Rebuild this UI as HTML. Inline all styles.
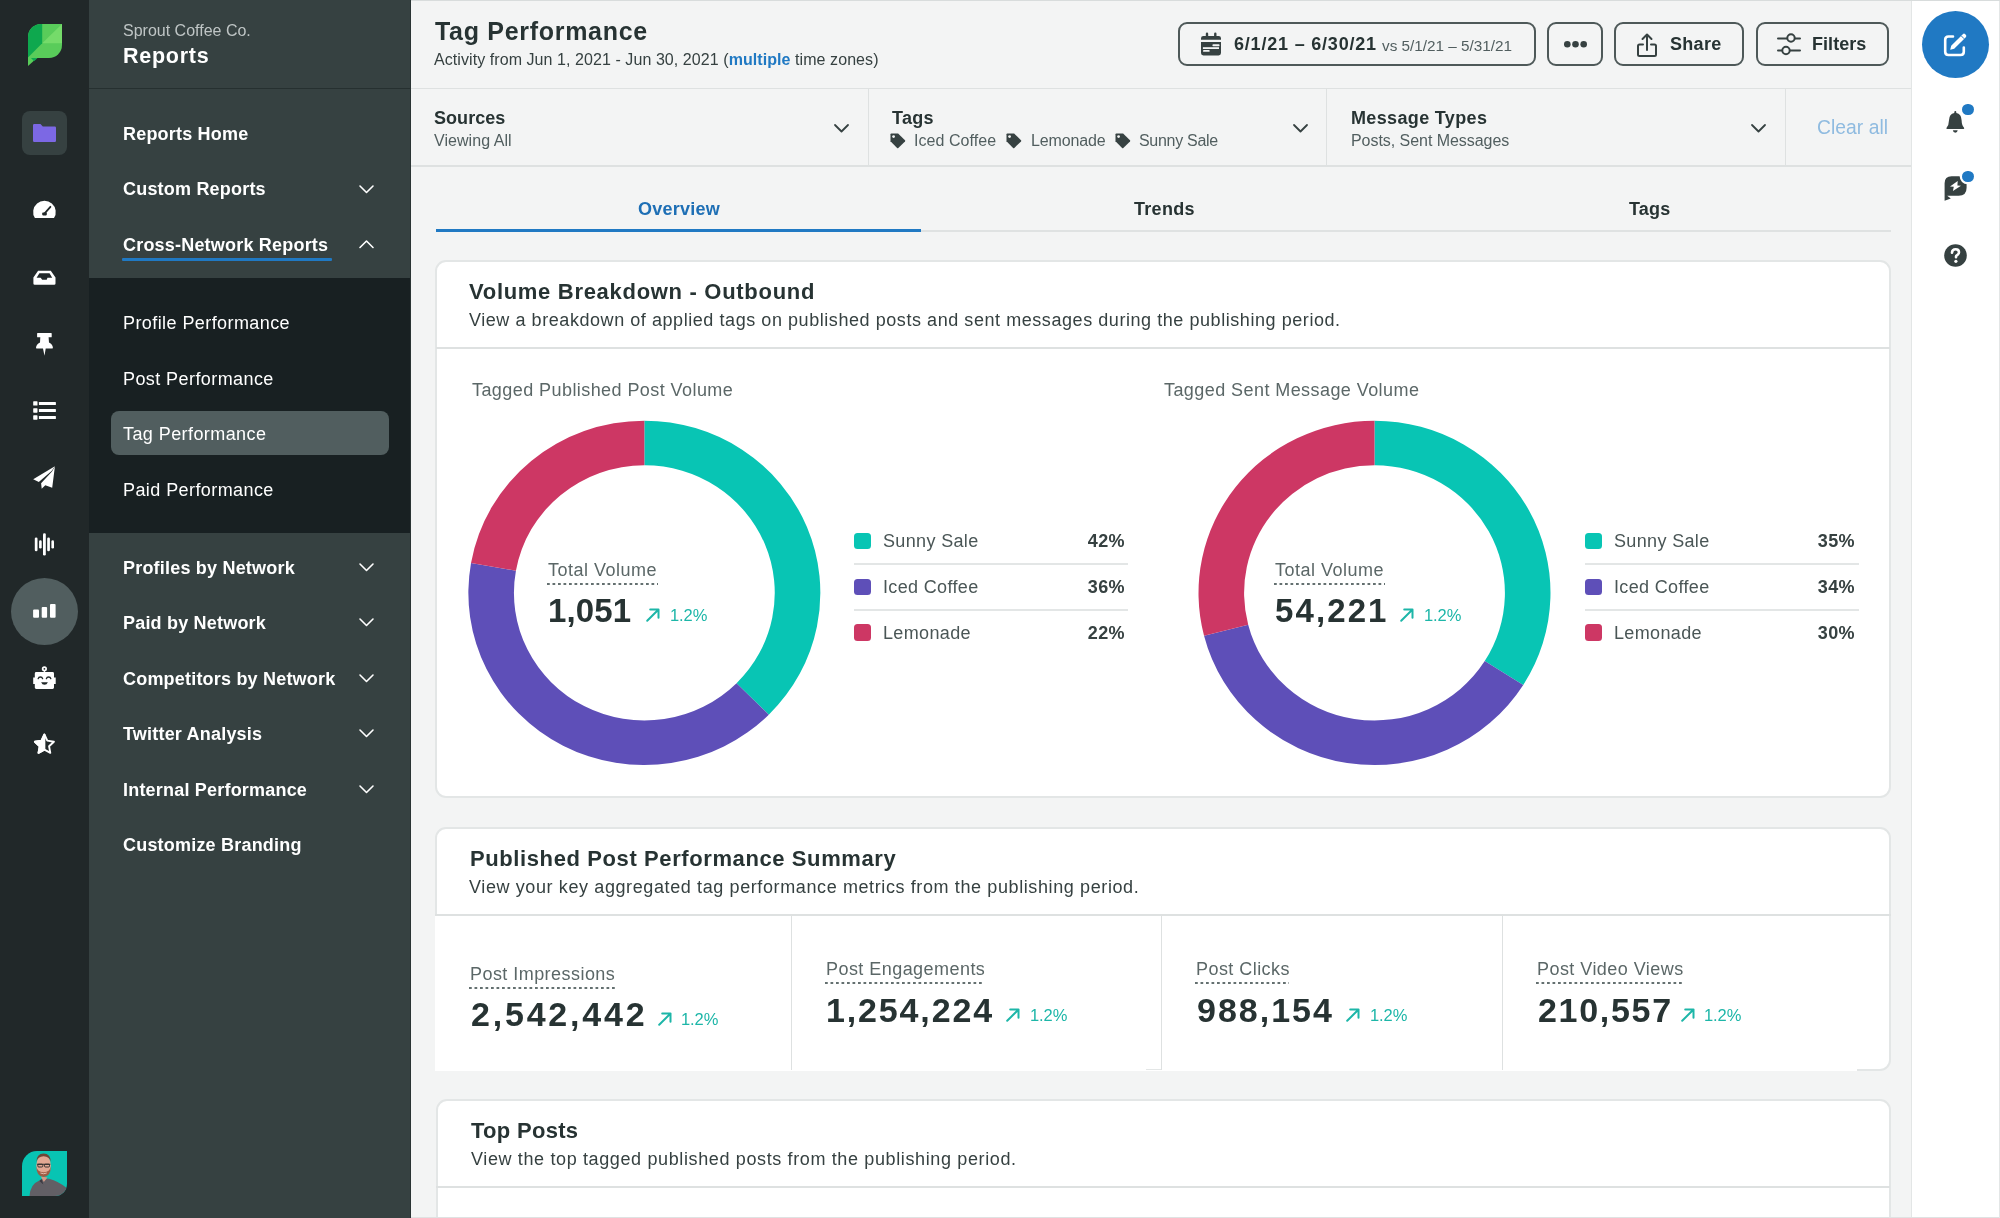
<!DOCTYPE html>
<html><head><meta charset="utf-8"><title>Tag Performance</title>
<style>
*{box-sizing:border-box;margin:0;padding:0}
html,body{width:2000px;height:1218px;overflow:hidden;background:#f3f4f4;font-family:"Liberation Sans",sans-serif}
.t{position:absolute;line-height:1;white-space:nowrap;will-change:transform}
.r{position:absolute}
svg{position:absolute;overflow:visible}
</style></head><body>
<div class="r" style="left:0px;top:0px;width:89px;height:1218px;background:#212829;"></div>
<svg style="left:28px;top:23.5px" width="34" height="42" viewBox="0 0 34 42">
<defs><clipPath id="leaf"><path d="M13 0H34V21A13 13 0 0 1 21 34H0V13A13 13 0 0 1 13 0Z"/></clipPath></defs>
<g clip-path="url(#leaf)">
<rect x="0" y="0" width="34" height="34" fill="#59cc5a"/>
<polygon points="0,0 14.2,0 14.2,19.3 0,33.5" fill="#0ea84e"/>
<polygon points="14.2,19.3 34,0 34,19.3" fill="#75db6a"/>
</g>
<polygon points="0,33.5 9.5,33.5 0,42" fill="#59cc5a"/>
<polygon points="3,34 9.5,34 6,37.2" fill="#0ea84e"/>
</svg>
<div class="r" style="left:22px;top:111px;width:45px;height:44px;background:#364141;border-radius:8px;"></div>
<svg style="left:33px;top:124px" width="23" height="18" viewBox="0 0 23 18">
<path d="M0 1.2Q0 0 1.2 0H7.5L9.8 2.6H21.8Q23 2.6 23 3.8V16.8Q23 18 21.8 18H1.2Q0 18 0 16.8Z" fill="#7c68e4"/>
</svg>
<svg style="left:24px;top:190px" width="40" height="40" viewBox="0 0 40 40">
<path d="M10.9 28.1A11.3 11.3 0 1 1 30 28.1Z" fill="#fff"/>
<path d="M20.2 23.8L26.4 16.8" stroke="#212829" stroke-width="1.8" stroke-linecap="round"/>
<rect x="18.2" y="22.6" width="4.6" height="2.8" rx="0.8" fill="#212829"/>
</svg>
<svg style="left:24px;top:258px" width="40" height="40" viewBox="0 0 40 40">
<path d="M14.1 12.8H26.8L31.5 19.4V25.5Q31.5 26.8 30.2 26.8H10.7Q9.4 26.8 9.4 25.5V19.4Z M15.4 15.3L12.6 19.7H16.7L18.2 21.8H22.7L23.5 19.7H28.2L25.5 15.3Z" fill="#fff" fill-rule="evenodd"/>
</svg>
<svg style="left:24px;top:325px" width="40" height="40" viewBox="0 0 40 40">
<path d="M13.6 8H27.2Q27.7 8 27.7 8.6V11.8Q27.7 12.3 27.2 12.3H24.6L25 17.6Q28.8 19.6 28.9 22.8Q28.9 23.5 28.3 23.5H21.7L20.5 30.7L19 23.5H12.6Q12 23.5 12 22.8Q12.2 19.6 16 17.6L16.3 12.3H13.6Q13.1 12.3 13.1 11.8V8.6Q13.1 8 13.6 8Z" fill="#fff"/>
</svg>
<svg style="left:24px;top:390px" width="40" height="40" viewBox="0 0 40 40" fill="#fff">
<rect x="9.2" y="11.2" width="4.3" height="4.4" rx="0.6"/><rect x="14.9" y="12" width="17" height="2.9" rx="0.5"/>
<rect x="9.2" y="18.2" width="4.3" height="4.5" rx="0.6"/><rect x="14.9" y="19" width="17" height="3" rx="0.5"/>
<rect x="9.2" y="25.3" width="4.3" height="4.4" rx="0.6"/><rect x="14.9" y="26" width="17" height="2.9" rx="0.5"/>
</svg>
<svg style="left:24px;top:457px" width="40" height="40" viewBox="0 0 40 40" fill="#fff">
<path d="M30.9 9.2L9.2 22.3L14.8 25L27.6 14.1Z"/>
<path d="M30.9 9.4L28.2 30.7L21.3 28.2L17.7 31.7L17.1 26.3L28 14.6Z"/>
</svg>
<svg style="left:24px;top:524px" width="40" height="40" viewBox="0 0 40 40" fill="#fff">
<rect x="10.8" y="13.5" width="2.7" height="13.8" rx="1.3"/>
<rect x="15.1" y="16.3" width="2.6" height="8.3" rx="1.3"/>
<rect x="19" y="9.2" width="2.8" height="22.3" rx="1.3"/>
<rect x="23.2" y="13.5" width="2.7" height="13.8" rx="1.3"/>
<rect x="27.4" y="16.3" width="2.6" height="8.3" rx="1.3"/>
</svg>
<div class="r" style="left:11px;top:578px;width:67px;height:67px;border-radius:50%;background:#515e5f"></div>
<svg style="left:0;top:0" width="89" height="700" viewBox="0 0 89 700" fill="#fff">
<rect x="33.1" y="609.6" width="5.9" height="8.2" rx="1"/>
<rect x="41.7" y="606.9" width="5.4" height="10.9" rx="1"/>
<rect x="50" y="604" width="5.6" height="13.8" rx="1"/>
</svg>
<svg style="left:24px;top:658px" width="40" height="40" viewBox="0 0 40 40">
<path d="M12.2 14H28.6Q30 14 30 15.4V19.4H31.7V25.9H30V29.6Q30 31 28.6 31H12.2Q10.8 31 10.8 29.6V25.9H9.2V19.4H10.8V15.4Q10.8 14 12.2 14Z" fill="#fff"/>
<circle cx="20.4" cy="10.8" r="2.6" fill="#fff"/><circle cx="20.4" cy="10.8" r="0.9" fill="#212829"/>
<rect x="19.9" y="12" width="1" height="2.5" fill="#fff"/>
<path d="M14.2 20.6A2.3 2.3 0 0 1 18.6 20.6M22.4 20.6A2.3 2.3 0 0 1 26.8 20.6" stroke="#212829" stroke-width="1.4" fill="none" stroke-linecap="round"/>
<path d="M17.1 24.2H23.9Q22.8 26.8 20.5 26.8Q18.2 26.8 17.1 24.2Z" fill="#212829"/>
</svg>
<svg style="left:24px;top:724px" width="40" height="40" viewBox="0 0 40 40">
<path d="M20.4 10.5L23.3 16.6L29.9 17.7L25.1 22.3L26.3 28.8L20.4 25.7L14.5 28.8L15.7 22.3L10.9 17.7L17.5 16.6Z" fill="none" stroke="#fff" stroke-width="1.9" stroke-linejoin="round"/>
<path d="M20.4 10.5V25.7L14.5 28.8L15.7 22.3L10.9 17.7L17.5 16.6Z" fill="#fff" stroke="#fff" stroke-width="1.9" stroke-linejoin="round"/>
</svg>
<svg style="left:22px;top:1151px" width="45" height="45" viewBox="0 0 45 45">
<defs><clipPath id="av"><path d="M15 0H45V33A12 12 0 0 1 33 45H0V15A15 15 0 0 1 15 0Z"/></clipPath></defs>
<g clip-path="url(#av)">
<rect width="45" height="45" fill="#08c4b3"/>
<path d="M7.5 45Q8.5 33 16.5 30L21 27.5L27 27.8Q37 30.5 46 38V45Z" fill="#625f65"/>
<path d="M18.8 25.5L21.8 31L25.5 26.5Z" fill="#d39a86"/>
<path d="M19.5 28L21.3 33.5L17.5 30Z" fill="#3a3840"/>
<ellipse cx="21.6" cy="14.6" rx="7.3" ry="10.6" fill="#e2a893"/>
<path d="M14.4 15.5Q14.4 25.5 21.6 26Q28.8 25.5 28.8 15.5Q27.5 21.5 21.6 21.2Q15.7 21.5 14.4 15.5Z" fill="#9c5d45"/>
<path d="M14.3 11Q14.5 2.4 21.6 2.4Q28.7 2.4 28.9 11Q27.5 5.5 21.6 5.3Q15.7 5.5 14.3 11Z" fill="#6e4636"/>
<path d="M15 13.2H28.3" stroke="#2b2b2b" stroke-width="1.1"/>
<rect x="15.8" y="13.2" width="5" height="2.8" rx="1" fill="none" stroke="#2b2b2b" stroke-width="0.9"/>
<rect x="22.5" y="13.2" width="5" height="2.8" rx="1" fill="none" stroke="#2b2b2b" stroke-width="0.9"/>
<path d="M18.5 22Q21.6 23.5 24.7 22" stroke="#ecc3b5" stroke-width="0.9" fill="none"/>
</g>
</svg>
<div class="r" style="left:89px;top:0px;width:322px;height:1218px;background:#364141;"></div>
<div class="r" style="left:410px;top:0px;width:1px;height:1218px;background:#2a3434;"></div>
<div class="r" style="left:89px;top:88px;width:321px;height:1px;background:#263030;"></div>
<div class="t " style="left:122.50px;top:22.76px;font-size:16px;color:#bfc5c5;font-weight:400;letter-spacing:0px;">Sprout Coffee Co.</div>
<div class="t " style="left:123.00px;top:45.60px;font-size:21.5px;color:#ffffff;font-weight:700;letter-spacing:0.75px;">Reports</div>
<div class="t " style="left:122.50px;top:124.86px;font-size:18px;color:#ffffff;font-weight:700;letter-spacing:0.2px;">Reports Home</div>
<div class="t " style="left:122.50px;top:180.46px;font-size:18px;color:#ffffff;font-weight:700;letter-spacing:0.2px;">Custom Reports</div>
<div class="t " style="left:122.50px;top:236.16px;font-size:18px;color:#ffffff;font-weight:700;letter-spacing:0.2px;">Cross-Network Reports</div>
<div class="r" style="left:122px;top:258px;width:210px;height:3px;background:#2079c3;border-radius:1px;"></div>
<svg style="left:359px;top:184.8px" width="15" height="9" viewBox="0 0 15 9"><path d="M1 1L7.5 7.5L14 1" stroke="#fff" stroke-width="1.6" fill="none" stroke-linecap="round" stroke-linejoin="round"/></svg>
<svg style="left:359px;top:239.5px" width="15" height="9" viewBox="0 0 15 9"><path d="M1 7.5L7.5 1L14 7.5" stroke="#fff" stroke-width="1.6" fill="none" stroke-linecap="round" stroke-linejoin="round"/></svg>
<div class="r" style="left:89px;top:278px;width:321px;height:255px;background:#182022;"></div>
<div class="r" style="left:111px;top:411px;width:278px;height:44px;background:#515e5f;border-radius:8px;"></div>
<div class="t " style="left:122.50px;top:314.16px;font-size:18px;color:#ffffff;font-weight:400;letter-spacing:0.42px;">Profile Performance</div>
<div class="t " style="left:122.50px;top:369.76px;font-size:18px;color:#ffffff;font-weight:400;letter-spacing:0.42px;">Post Performance</div>
<div class="t " style="left:122.50px;top:425.26px;font-size:18px;color:#ffffff;font-weight:400;letter-spacing:0.42px;">Tag Performance</div>
<div class="t " style="left:122.50px;top:480.76px;font-size:18px;color:#ffffff;font-weight:400;letter-spacing:0.42px;">Paid Performance</div>
<div class="t " style="left:122.50px;top:558.76px;font-size:18px;color:#ffffff;font-weight:700;letter-spacing:0.2px;">Profiles by Network</div>
<svg style="left:359px;top:563.0px" width="15" height="9" viewBox="0 0 15 9"><path d="M1 1L7.5 7.5L14 1" stroke="#fff" stroke-width="1.6" fill="none" stroke-linecap="round" stroke-linejoin="round"/></svg>
<div class="t " style="left:122.50px;top:614.24px;font-size:18px;color:#ffffff;font-weight:700;letter-spacing:0.2px;">Paid by Network</div>
<svg style="left:359px;top:618.48px" width="15" height="9" viewBox="0 0 15 9"><path d="M1 1L7.5 7.5L14 1" stroke="#fff" stroke-width="1.6" fill="none" stroke-linecap="round" stroke-linejoin="round"/></svg>
<div class="t " style="left:122.50px;top:669.72px;font-size:18px;color:#ffffff;font-weight:700;letter-spacing:0.2px;">Competitors by Network</div>
<svg style="left:359px;top:673.96px" width="15" height="9" viewBox="0 0 15 9"><path d="M1 1L7.5 7.5L14 1" stroke="#fff" stroke-width="1.6" fill="none" stroke-linecap="round" stroke-linejoin="round"/></svg>
<div class="t " style="left:122.50px;top:725.20px;font-size:18px;color:#ffffff;font-weight:700;letter-spacing:0.2px;">Twitter Analysis</div>
<svg style="left:359px;top:729.44px" width="15" height="9" viewBox="0 0 15 9"><path d="M1 1L7.5 7.5L14 1" stroke="#fff" stroke-width="1.6" fill="none" stroke-linecap="round" stroke-linejoin="round"/></svg>
<div class="t " style="left:122.50px;top:780.68px;font-size:18px;color:#ffffff;font-weight:700;letter-spacing:0.2px;">Internal Performance</div>
<svg style="left:359px;top:784.92px" width="15" height="9" viewBox="0 0 15 9"><path d="M1 1L7.5 7.5L14 1" stroke="#fff" stroke-width="1.6" fill="none" stroke-linecap="round" stroke-linejoin="round"/></svg>
<div class="t " style="left:122.50px;top:836.16px;font-size:18px;color:#ffffff;font-weight:700;letter-spacing:0.2px;">Customize Branding</div>
<div class="r" style="left:411px;top:0px;width:1501px;height:1px;background:#d8dcdc;"></div>
<div class="t " style="left:434.50px;top:19.04px;font-size:25px;color:#273333;font-weight:700;letter-spacing:0.7px;">Tag Performance</div>
<div class="t " style="left:434.00px;top:51.66px;font-size:16px;color:#364141;font-weight:400;letter-spacing:0.07px;">Activity from Jun 1, 2021 - Jun 30, 2021 (<b style="color:#2079c3">multiple</b> time zones)</div>
<div class="r" style="left:411px;top:88px;width:1501px;height:1px;background:#dee1e1;"></div>
<div class="r" style="left:1178px;top:22px;width:358px;height:44px;border:2px solid #4e5959;border-radius:9px"></div>
<svg style="left:1201px;top:33px" width="20" height="23" viewBox="0 0 20 23">
<path d="M6 0.8V3.2M14.3 0.8V3.2" stroke="#364141" stroke-width="2.4" stroke-linecap="round"/>
<path d="M2.4 2.9H17.6Q20 2.9 20 5.3V6.8H0V5.3Q0 2.9 2.4 2.9Z" fill="#364141"/>
<path d="M0 8.9H20V20Q20 22.4 17.6 22.4H2.4Q0 22.4 0 20Z" fill="#364141"/>
<rect x="11.4" y="11.3" width="7.2" height="1.9" rx="0.9" fill="#f3f4f4"/>
<rect x="1.9" y="14.2" width="16.1" height="1.8" fill="#f3f4f4"/>
<rect x="2" y="17" width="6.7" height="1.8" rx="0.9" fill="#f3f4f4"/>
</svg>
<div class="t " style="left:1233.80px;top:35.36px;font-size:18px;color:#273333;font-weight:700;letter-spacing:0.8px;">6/1/21 – 6/30/21</div>
<div class="t " style="left:1382.00px;top:37.65px;font-size:15.3px;color:#515e5f;font-weight:400;letter-spacing:0px;">vs 5/1/21 – 5/31/21</div>
<div class="r" style="left:1547px;top:22px;width:56px;height:44px;border:2px solid #4e5959;border-radius:9px"></div>
<svg style="left:1564px;top:41px" width="23" height="7" viewBox="0 0 23 7" fill="#364141"><circle cx="3.3" cy="3.3" r="3.3"/><circle cx="11.5" cy="3.3" r="3.3"/><circle cx="19.7" cy="3.3" r="3.3"/></svg>
<div class="r" style="left:1614px;top:22px;width:130px;height:44px;border:2px solid #4e5959;border-radius:9px"></div>
<svg style="left:1637px;top:33px" width="21" height="24" viewBox="0 0 21 24">
<path d="M6 11.5H2.5Q1 11.5 1 13V21.5Q1 23 2.5 23H17.5Q19 23 19 21.5V13Q19 11.5 17.5 11.5H14M10 17V1.5M5.5 6L10 1.5L14.5 6" stroke="#364141" stroke-width="2" fill="none" stroke-linecap="round" stroke-linejoin="round"/>
</svg>
<div class="t " style="left:1670.00px;top:35.36px;font-size:18px;color:#273333;font-weight:700;letter-spacing:0.3px;">Share</div>
<div class="r" style="left:1756px;top:22px;width:133px;height:44px;border:2px solid #4e5959;border-radius:9px"></div>
<svg style="left:1777px;top:33px" width="24" height="23" viewBox="0 0 24 23">
<path d="M1 5.5H10M18 5.5H23M1 17.5H5M13 17.5H23" stroke="#364141" stroke-width="2" stroke-linecap="round"/>
<circle cx="14" cy="5" r="3.7" stroke="#364141" stroke-width="2" fill="none"/>
<circle cx="9" cy="17.5" r="3.7" stroke="#364141" stroke-width="2" fill="none"/>
</svg>
<div class="t " style="left:1811.80px;top:35.36px;font-size:18px;color:#273333;font-weight:700;letter-spacing:0.05px;">Filters</div>
<div class="r" style="left:411px;top:165px;width:1501px;height:1.5px;background:#dee1e1;"></div>
<div class="r" style="left:868px;top:88px;width:1px;height:78px;background:#dee1e1;"></div>
<div class="r" style="left:1326px;top:88px;width:1px;height:78px;background:#dee1e1;"></div>
<div class="r" style="left:1785px;top:88px;width:1px;height:78px;background:#dee1e1;"></div>
<div class="t " style="left:434.00px;top:108.86px;font-size:18px;color:#273333;font-weight:700;letter-spacing:0.05px;">Sources</div>
<div class="t " style="left:434.00px;top:132.66px;font-size:16px;color:#515e5f;font-weight:400;letter-spacing:0.05px;">Viewing All</div>
<svg style="left:834px;top:124px" width="15" height="9" viewBox="0 0 15 9"><path d="M1 1L7.5 7.5L14 1" stroke="#364141" stroke-width="1.8" fill="none" stroke-linecap="round" stroke-linejoin="round"/></svg>
<div class="t " style="left:892.30px;top:108.86px;font-size:18px;color:#273333;font-weight:700;letter-spacing:0.3px;">Tags</div>
<svg style="left:889.5px;top:132.5px" width="16" height="16" viewBox="0 0 16 16"><path d="M0.5 1.3Q0.5 0.5 1.3 0.5H8.1L15 7.3Q15.5 7.9 15 8.5L8.3 14.9Q7.7 15.4 7.1 14.9L0.5 8.3Z" fill="#364141"/><circle cx="3.6" cy="3.6" r="1.4" fill="#f3f4f4"/></svg>
<div class="t " style="left:914.20px;top:132.66px;font-size:16px;color:#515e5f;font-weight:400;letter-spacing:0.05px;">Iced Coffee</div>
<svg style="left:1006px;top:132.5px" width="16" height="16" viewBox="0 0 16 16"><path d="M0.5 1.3Q0.5 0.5 1.3 0.5H8.1L15 7.3Q15.5 7.9 15 8.5L8.3 14.9Q7.7 15.4 7.1 14.9L0.5 8.3Z" fill="#364141"/><circle cx="3.6" cy="3.6" r="1.4" fill="#f3f4f4"/></svg>
<div class="t " style="left:1031.00px;top:132.66px;font-size:16px;color:#515e5f;font-weight:400;letter-spacing:-0.15px;">Lemonade</div>
<svg style="left:1115px;top:132.5px" width="16" height="16" viewBox="0 0 16 16"><path d="M0.5 1.3Q0.5 0.5 1.3 0.5H8.1L15 7.3Q15.5 7.9 15 8.5L8.3 14.9Q7.7 15.4 7.1 14.9L0.5 8.3Z" fill="#364141"/><circle cx="3.6" cy="3.6" r="1.4" fill="#f3f4f4"/></svg>
<div class="t " style="left:1139.00px;top:132.66px;font-size:16px;color:#515e5f;font-weight:400;letter-spacing:-0.3px;">Sunny Sale</div>
<svg style="left:1292.5px;top:123.5px" width="15" height="9" viewBox="0 0 15 9"><path d="M1 1L7.5 7.5L14 1" stroke="#364141" stroke-width="1.8" fill="none" stroke-linecap="round" stroke-linejoin="round"/></svg>
<div class="t " style="left:1350.60px;top:108.86px;font-size:18px;color:#273333;font-weight:700;letter-spacing:0.35px;">Message Types</div>
<div class="t " style="left:1350.60px;top:132.66px;font-size:16px;color:#515e5f;font-weight:400;letter-spacing:-0.05px;">Posts, Sent Messages</div>
<svg style="left:1750.5px;top:123.5px" width="15" height="9" viewBox="0 0 15 9"><path d="M1 1L7.5 7.5L14 1" stroke="#364141" stroke-width="1.8" fill="none" stroke-linecap="round" stroke-linejoin="round"/></svg>
<div class="t " style="left:1816.70px;top:117.86px;font-size:19.3px;color:#8fbbe0;font-weight:400;letter-spacing:0.05px;">Clear all</div>
<div class="r" style="left:921px;top:230px;width:970px;height:2px;background:#dfe2e2;"></div>
<div class="r" style="left:436px;top:229px;width:485px;height:3px;background:#2079c3;"></div>
<div class="t " style="left:637.60px;top:200.16px;font-size:18px;color:#1e6fb5;font-weight:700;letter-spacing:0.25px;">Overview</div>
<div class="t " style="left:1133.90px;top:200.16px;font-size:18px;color:#273333;font-weight:700;letter-spacing:0.3px;">Trends</div>
<div class="t " style="left:1628.60px;top:200.16px;font-size:18px;color:#273333;font-weight:700;letter-spacing:0.2px;">Tags</div>
<div class="r" style="left:1911px;top:0px;width:89px;height:1218px;background:#ffffff;"></div>
<div class="r" style="left:1911px;top:0px;width:1px;height:1218px;background:#e3e6e6;"></div>
<div class="r" style="left:1922px;top:11px;width:67px;height:67px;border-radius:50%;background:#2079c3"></div>
<svg style="left:1943px;top:32px" width="26" height="26" viewBox="0 0 26 26">
<path d="M10 4.5H5.5Q2.2 4.5 2.2 7.8V19.8Q2.2 23 5.5 23H17.5Q20.8 23 20.8 19.8V15.5" stroke="#fff" stroke-width="2.6" fill="none" stroke-linecap="round"/>
<path d="M7.2 17.8L8.2 13.8L19.8 2.2Q21 1 22.2 2.2L22.8 2.8Q24 4 22.8 5.2L11.2 16.8Z" fill="#fff"/>
<path d="M18.2 3.8L21.2 6.8" stroke="#2079c3" stroke-width="1"/>
</svg>
<svg style="left:1945px;top:110px" width="22" height="24" viewBox="0 0 22 24">
<path d="M10.3 1.1Q11.3 1.1 11.3 2.2V3.1Q16.4 4.2 16.6 10.2Q16.8 15.3 18.9 17.6Q19.8 18.8 18.6 19.1H2Q0.8 18.8 1.7 17.6Q3.8 15.3 4 10.2Q4.2 4.2 9.3 3.1V2.2Q9.3 1.1 10.3 1.1Z" fill="#364141"/>
<path d="M7.9 20.3H12.7Q12.5 22.7 10.3 22.7Q8.1 22.7 7.9 20.3Z" fill="#364141"/>
</svg>
<div class="r" style="left:1962.3px;top:104px;width:11.4px;height:11.4px;border-radius:50%;background:#2079c3;box-shadow:0 0 0 2px #fff"></div>
<svg style="left:1944px;top:176px" width="24" height="26" viewBox="0 0 24 26">
<path d="M0.6 7.3Q0.6 0.3 7.6 0.3H22.6V11.7Q22.6 19.7 14.6 19.7H3.2L6.8 22.5L0.6 24.8Z" fill="#364141"/>
<path d="M13.7 5.1L6 10.5L9.8 10.7L8.9 14.9L17 9.7L13.4 9.4Z" fill="#fff"/>
</svg>
<div class="r" style="left:1962.1px;top:170.5px;width:11.5px;height:11.5px;border-radius:50%;background:#2079c3;box-shadow:0 0 0 2.3px #fff"></div>
<svg style="left:1944px;top:244px" width="23" height="23" viewBox="0 0 23 23">
<circle cx="11.5" cy="11.5" r="11.3" fill="#364141"/>
<path d="M8 8.6Q8.2 5.2 11.6 5.2Q15 5.2 15 8.3Q15 10.2 12.8 11.3Q12 11.8 12 12.8V13.3" stroke="#fff" stroke-width="2.6" fill="none" stroke-linecap="round"/>
<circle cx="11.9" cy="17.3" r="1.6" fill="#fff"/>
</svg>
<div class="r" style="left:435px;top:260px;width:1456px;height:538px;background:#fff;border:2px solid #e3e6e6;border-radius:11px"></div>
<div class="r" style="left:436px;top:347px;width:1454px;height:1.5px;background:#dee1e1;"></div>
<div class="t " style="left:469.10px;top:281.18px;font-size:22px;color:#273333;font-weight:700;letter-spacing:0.7px;">Volume Breakdown - Outbound</div>
<div class="t " style="left:469.00px;top:311.06px;font-size:18px;color:#364141;font-weight:400;letter-spacing:0.56px;">View a breakdown of applied tags on published posts and sent messages during the publishing period.</div>
<div class="t " style="left:471.70px;top:380.56px;font-size:18px;color:#5b6767;font-weight:400;letter-spacing:0.43px;">Tagged Published Post Volume</div>
<div class="t " style="left:1164.00px;top:380.56px;font-size:18px;color:#5b6767;font-weight:400;letter-spacing:0.43px;">Tagged Sent Message Volume</div>
<svg style="left:0;top:0" width="2000" height="1218" viewBox="0 0 2000 1218"><g transform="translate(644.35 592.9) scale(1.022 1)"><path d="M0.000 -172.200A172.2 172.2 0 0 1 121.764 121.764L90.227 90.227A127.6 127.6 0 0 0 0.000 -127.600Z" fill="#08c5b4"/><path d="M121.764 121.764A172.2 172.2 0 0 1 -169.584 -29.902L-125.661 -22.158A127.6 127.6 0 0 0 90.227 90.227Z" fill="#5e4fb8"/><path d="M-169.584 -29.902A172.2 172.2 0 0 1 -0.000 -172.200L-0.000 -127.600A127.6 127.6 0 0 0 -125.661 -22.158Z" fill="#cd3764"/></g></svg>
<svg style="left:0;top:0" width="2000" height="1218" viewBox="0 0 2000 1218"><g transform="translate(1374.5 592.9) scale(1.022 1)"><path d="M0.000 -172.200A172.2 172.2 0 0 1 145.554 92.015L107.855 68.183A127.6 127.6 0 0 0 0.000 -127.600Z" fill="#08c5b4"/><path d="M145.554 92.015A172.2 172.2 0 0 1 -166.790 42.824L-123.591 31.733A127.6 127.6 0 0 0 107.855 68.183Z" fill="#5e4fb8"/><path d="M-166.790 42.824A172.2 172.2 0 0 1 -0.000 -172.200L-0.000 -127.600A127.6 127.6 0 0 0 -123.591 31.733Z" fill="#cd3764"/></g></svg>
<div class="t " style="left:547.80px;top:560.56px;font-size:18px;color:#5b6767;font-weight:400;letter-spacing:0.5px;">Total Volume</div>
<div class="r" style="left:546.5px;top:582.5px;width:111px;height:2px;background-image:linear-gradient(90deg,#647070 55%,transparent 55%);background-size:5.5px 1.6px"></div>
<div class="t " style="left:547.80px;top:593.57px;font-size:33px;color:#273333;font-weight:700;letter-spacing:0.1px;">1,051</div>
<svg style="left:646px;top:607.5px" width="14" height="14" viewBox="0 0 14 14"><path d="M1.2 12.8L12.5 1.5M4.2 1.5H12.5V9.8" stroke="#1db6a8" stroke-width="2" fill="none" stroke-linecap="round" stroke-linejoin="round"/></svg>
<div class="t " style="left:669.80px;top:606.83px;font-size:16.5px;color:#1db6a8;font-weight:400;letter-spacing:-0.1px;">1.2%</div>
<div class="t " style="left:1275.00px;top:560.56px;font-size:18px;color:#5b6767;font-weight:400;letter-spacing:0.5px;">Total Volume</div>
<div class="r" style="left:1273.7px;top:582.5px;width:111px;height:2px;background-image:linear-gradient(90deg,#647070 55%,transparent 55%);background-size:5.5px 1.6px"></div>
<div class="t " style="left:1275.00px;top:593.57px;font-size:33px;color:#273333;font-weight:700;letter-spacing:2.1px;">54,221</div>
<svg style="left:1400px;top:607.5px" width="14" height="14" viewBox="0 0 14 14"><path d="M1.2 12.8L12.5 1.5M4.2 1.5H12.5V9.8" stroke="#1db6a8" stroke-width="2" fill="none" stroke-linecap="round" stroke-linejoin="round"/></svg>
<div class="t " style="left:1424.00px;top:606.83px;font-size:16.5px;color:#1db6a8;font-weight:400;letter-spacing:-0.1px;">1.2%</div>
<div class="r" style="left:854.25px;top:532.75px;width:16.5px;height:16.5px;border-radius:3.5px;background:#08c5b4"></div>
<div class="t " style="left:882.75px;top:532.06px;font-size:18px;color:#4a5656;font-weight:400;letter-spacing:0.35px;">Sunny Sale</div>
<div class="t" style="left:1044.5px;width:80px;text-align:right;top:532.06px;font-size:18px;font-weight:700;color:#364141;letter-spacing:0.4px">42%</div>
<div class="r" style="left:854.25px;top:563.0px;width:273.75px;height:2px;background:#e3e6e6;"></div>
<div class="r" style="left:854.25px;top:578.50px;width:16.5px;height:16.5px;border-radius:3.5px;background:#5e4fb8"></div>
<div class="t " style="left:882.75px;top:577.81px;font-size:18px;color:#4a5656;font-weight:400;letter-spacing:0.35px;">Iced Coffee</div>
<div class="t" style="left:1044.5px;width:80px;text-align:right;top:577.81px;font-size:18px;font-weight:700;color:#364141;letter-spacing:0.4px">36%</div>
<div class="r" style="left:854.25px;top:608.7px;width:273.75px;height:2px;background:#e3e6e6;"></div>
<div class="r" style="left:854.25px;top:624.25px;width:16.5px;height:16.5px;border-radius:3.5px;background:#cd3764"></div>
<div class="t " style="left:882.75px;top:623.56px;font-size:18px;color:#4a5656;font-weight:400;letter-spacing:0.35px;">Lemonade</div>
<div class="t" style="left:1044.5px;width:80px;text-align:right;top:623.56px;font-size:18px;font-weight:700;color:#364141;letter-spacing:0.4px">22%</div>
<div class="r" style="left:1585px;top:532.75px;width:16.5px;height:16.5px;border-radius:3.5px;background:#08c5b4"></div>
<div class="t " style="left:1613.50px;top:532.06px;font-size:18px;color:#4a5656;font-weight:400;letter-spacing:0.35px;">Sunny Sale</div>
<div class="t" style="left:1775px;width:80px;text-align:right;top:532.06px;font-size:18px;font-weight:700;color:#364141;letter-spacing:0.4px">35%</div>
<div class="r" style="left:1585px;top:563.0px;width:273.5px;height:2px;background:#e3e6e6;"></div>
<div class="r" style="left:1585px;top:578.50px;width:16.5px;height:16.5px;border-radius:3.5px;background:#5e4fb8"></div>
<div class="t " style="left:1613.50px;top:577.81px;font-size:18px;color:#4a5656;font-weight:400;letter-spacing:0.35px;">Iced Coffee</div>
<div class="t" style="left:1775px;width:80px;text-align:right;top:577.81px;font-size:18px;font-weight:700;color:#364141;letter-spacing:0.4px">34%</div>
<div class="r" style="left:1585px;top:608.7px;width:273.5px;height:2px;background:#e3e6e6;"></div>
<div class="r" style="left:1585px;top:624.25px;width:16.5px;height:16.5px;border-radius:3.5px;background:#cd3764"></div>
<div class="t " style="left:1613.50px;top:623.56px;font-size:18px;color:#4a5656;font-weight:400;letter-spacing:0.35px;">Lemonade</div>
<div class="t" style="left:1775px;width:80px;text-align:right;top:623.56px;font-size:18px;font-weight:700;color:#364141;letter-spacing:0.4px">30%</div>
<div class="r" style="left:435px;top:826.5px;width:1456px;height:244px;background:#fff;border:2px solid #e3e6e6;border-radius:11px"></div>
<div class="r" style="left:435px;top:914px;width:1456px;height:1.5px;background:#dee1e1;"></div>
<div class="r" style="left:435px;top:915.5px;width:1422px;height:155px;background:#fff;"></div>
<div class="r" style="left:791px;top:915px;width:1px;height:155px;background:#dee1e1;"></div>
<div class="r" style="left:1161px;top:915px;width:1px;height:155px;background:#dee1e1;"></div>
<div class="r" style="left:1502px;top:915px;width:1px;height:155px;background:#dee1e1;"></div>
<div class="r" style="left:1146px;top:1069px;width:15px;height:1px;background:#e3e6e6;"></div>
<div class="t " style="left:469.50px;top:848.38px;font-size:22px;color:#273333;font-weight:700;letter-spacing:0.6px;">Published Post Performance Summary</div>
<div class="t " style="left:469.00px;top:877.76px;font-size:18px;color:#364141;font-weight:400;letter-spacing:0.61px;">View your key aggregated tag performance metrics from the publishing period.</div>
<div class="t " style="left:470.00px;top:964.76px;font-size:18px;color:#5b6767;font-weight:400;letter-spacing:0.45px;">Post Impressions</div>
<div class="r" style="left:469px;top:986.5px;width:146px;height:2px;background-image:linear-gradient(90deg,#647070 55%,transparent 55%);background-size:5.5px 1.6px"></div>
<div class="t " style="left:470.50px;top:997.22px;font-size:34px;color:#273333;font-weight:700;letter-spacing:2.8px;">2,542,442</div>
<svg style="left:657.6px;top:1012px" width="14" height="14" viewBox="0 0 14 14"><path d="M1.2 12.8L12.5 1.5M4.2 1.5H12.5V9.8" stroke="#1db6a8" stroke-width="2" fill="none" stroke-linecap="round" stroke-linejoin="round"/></svg>
<div class="t " style="left:681.00px;top:1011.03px;font-size:16.5px;color:#1db6a8;font-weight:400;letter-spacing:-0.1px;">1.2%</div>
<div class="t " style="left:825.60px;top:960.36px;font-size:18px;color:#5b6767;font-weight:400;letter-spacing:0.45px;">Post Engagements</div>
<div class="r" style="left:824.6px;top:982.1px;width:159px;height:2px;background-image:linear-gradient(90deg,#647070 55%,transparent 55%);background-size:5.5px 1.6px"></div>
<div class="t " style="left:826.10px;top:992.82px;font-size:34px;color:#273333;font-weight:700;letter-spacing:1.85px;">1,254,224</div>
<svg style="left:1006px;top:1007.6px" width="14" height="14" viewBox="0 0 14 14"><path d="M1.2 12.8L12.5 1.5M4.2 1.5H12.5V9.8" stroke="#1db6a8" stroke-width="2" fill="none" stroke-linecap="round" stroke-linejoin="round"/></svg>
<div class="t " style="left:1029.60px;top:1006.63px;font-size:16.5px;color:#1db6a8;font-weight:400;letter-spacing:-0.1px;">1.2%</div>
<div class="t " style="left:1196.00px;top:960.36px;font-size:18px;color:#5b6767;font-weight:400;letter-spacing:0.45px;">Post Clicks</div>
<div class="r" style="left:1195px;top:982.1px;width:94px;height:2px;background-image:linear-gradient(90deg,#647070 55%,transparent 55%);background-size:5.5px 1.6px"></div>
<div class="t " style="left:1196.50px;top:992.82px;font-size:34px;color:#273333;font-weight:700;letter-spacing:2.0px;">988,154</div>
<svg style="left:1345.6px;top:1007.6px" width="14" height="14" viewBox="0 0 14 14"><path d="M1.2 12.8L12.5 1.5M4.2 1.5H12.5V9.8" stroke="#1db6a8" stroke-width="2" fill="none" stroke-linecap="round" stroke-linejoin="round"/></svg>
<div class="t " style="left:1369.60px;top:1006.63px;font-size:16.5px;color:#1db6a8;font-weight:400;letter-spacing:-0.1px;">1.2%</div>
<div class="t " style="left:1537.00px;top:960.36px;font-size:18px;color:#5b6767;font-weight:400;letter-spacing:0.45px;">Post Video Views</div>
<div class="r" style="left:1536px;top:982.1px;width:147px;height:2px;background-image:linear-gradient(90deg,#647070 55%,transparent 55%);background-size:5.5px 1.6px"></div>
<div class="t " style="left:1537.50px;top:992.82px;font-size:34px;color:#273333;font-weight:700;letter-spacing:1.7px;">210,557</div>
<svg style="left:1681px;top:1007.6px" width="14" height="14" viewBox="0 0 14 14"><path d="M1.2 12.8L12.5 1.5M4.2 1.5H12.5V9.8" stroke="#1db6a8" stroke-width="2" fill="none" stroke-linecap="round" stroke-linejoin="round"/></svg>
<div class="t " style="left:1704.40px;top:1006.63px;font-size:16.5px;color:#1db6a8;font-weight:400;letter-spacing:-0.1px;">1.2%</div>
<div class="r" style="left:436px;top:1099px;width:1455px;height:200px;background:#fff;border:2px solid #e3e6e6;border-radius:11px"></div>
<div class="r" style="left:436px;top:1186px;width:1454px;height:1.5px;background:#dee1e1;"></div>
<div class="t " style="left:470.90px;top:1120.38px;font-size:22px;color:#273333;font-weight:700;letter-spacing:0.3px;">Top Posts</div>
<div class="t " style="left:471.00px;top:1150.06px;font-size:18px;color:#364141;font-weight:400;letter-spacing:0.63px;">View the top tagged published posts from the publishing period.</div>
<div class="r" style="left:411px;top:1217px;width:1589px;height:1px;background:#dfe2e2;"></div>
<div class="r" style="left:1999px;top:0px;width:1px;height:1218px;background:#e3e6e6;"></div>
<div class="r" style="left:1911px;top:0px;width:89px;height:1px;background:#d8dcdc;"></div>
</body></html>
